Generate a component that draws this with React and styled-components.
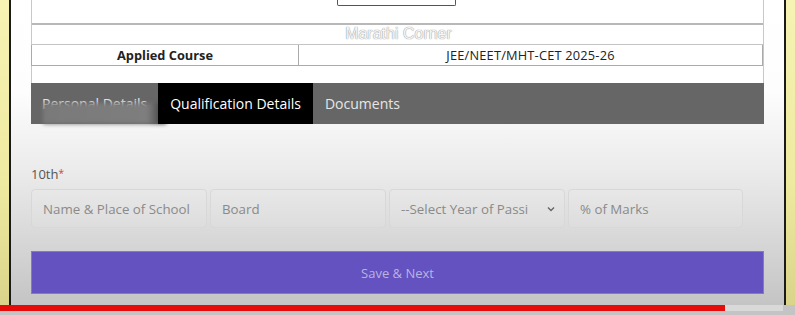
import React from 'react';
import styled, { createGlobalStyle } from 'styled-components';

const Global = createGlobalStyle`
  html, body { margin: 0; padding: 0; }
  body { background: #c0c0c0; font-family: "Open Sans", "Liberation Sans", sans-serif; }
`;

const Screen = styled.div`
  width: 795px;
  height: 315px;
  display: flex;
  flex-direction: column;
  overflow: hidden;
  background: #bdbdbd;
`;

const Stage = styled.div`
  height: 305px;
  display: flex;
`;

const Edge = styled.div`
  width: 9px;
  background: linear-gradient(180deg, #f6f3b4 0%, #eeeaa0 60%, #d9d48a 100%);
`;

const Frame = styled.div`
  flex: 1;
  border-left: 2px solid #1a1a1a;
  border-right: 2px solid #1a1a1a;
  background: linear-gradient(180deg, #ffffff 0%, #fdfdfd 30%, #ececec 55%, #d6d6d6 80%, #c4c4c4 100%);
  padding: 0 20px;
  display: flex;
  flex-direction: column;
`;

const Sheet = styled.div`
  background: #fff;
  border-left: 1px solid #c8c8c8;
  border-right: 1px solid #c8c8c8;
  display: flex;
  flex-direction: column;
`;

const TopRow = styled.div`
  height: 23px;
  display: flex;
  border-bottom: 2px solid #b8b8b8;
`;

const CutSelect = styled.div`
  width: 117px;
  height: 5px;
  margin-left: 305px;
  border: 1px solid #555;
  border-top: none;
  border-radius: 0 0 2px 2px;
`;

const Watermark = styled.div`
  height: 19px;
  text-align: center;
  font-family: "Liberation Sans", Arial, sans-serif;
  font-size: 16px;
  line-height: 17px;
  padding-left: 2px;
  color: #f6f6f6;
  text-shadow: 0 0 1px #8f8f8f, 0 0 1px #a8a8a8;
  border-bottom: 1px solid #c4c4c4;
  overflow: hidden;
`;

const CourseRow = styled.div`
  display: grid;
  grid-template-columns: 267px 1fr;
  height: 20px;
  border-left: 1px solid #aaa;
  border-bottom: 1px solid #aaa;
  margin-left: -1px;
`;

const Cell = styled.div`
  display: flex;
  align-items: center;
  justify-content: center;
  font-size: 12.8px;
  font-weight: ${p => (p.$bold ? 700 : 400)};
  color: #222;
  border-right: 1px solid #aaa;
  letter-spacing: ${p => (p.$bold ? '0' : '0.2px')};
`;

const Spacer = styled.div`
  height: 17px;
`;

const Tabs = styled.div`
  height: 41px;
  background: #666;
  display: flex;
  margin: 0 -1px;
`;

const Tab = styled.div`
  position: relative;
  display: flex;
  align-items: center;
  padding: 0 ${p => (p.$smudged ? '11px' : '12px')};
  font-size: 14px;
  color: ${p => (p.$active ? '#fff' : '#e6e6e6')};
  background: ${p => (p.$active ? '#000' : 'transparent')};
  ${p => p.$smudged && `
    &::after {
      content: '';
      position: absolute;
      left: 12px;
      right: -8px;
      top: 20px;
      bottom: 0;
      background: linear-gradient(90deg, #7a7a7a 0%, #7e7e7e 85%, #333 100%);
      filter: blur(2px);
    }
  `}
`;

const Form = styled.div`
  padding-top: 41px;
  display: flex;
  flex-direction: column;
`;

const Label = styled.div`
  font-size: 13px;
  color: #555;
  height: 16px;
  line-height: 16px;
  span {
    color: #d04050;
    font-size: 10px;
    vertical-align: 2px;
  }
`;

const Fields = styled.div`
  margin-top: 8px;
  display: grid;
  grid-template-columns: 176px 176px 176px 175px;
  gap: 3px;
`;

const Field = styled.div`
  height: 39px;
  box-sizing: border-box;
  border: 1px solid #d8d8d8;
  border-radius: 4px;
  background: rgba(255, 255, 255, 0.08);
  display: flex;
  align-items: center;
  justify-content: space-between;
  padding: 0 11px;
  font-size: 13.3px;
  color: #8a8a8a;
  white-space: nowrap;
  overflow: hidden;
`;

const Chevron = styled.svg`
  width: 10px;
  height: 10px;
  flex-shrink: 0;
  margin-right: -3px;
`;

const SaveButton = styled.div`
  margin-top: 23px;
  height: 43px;
  box-sizing: border-box;
  background: #6352bf;
  border: 1px solid #8577cf;
  display: flex;
  align-items: center;
  justify-content: center;
  font-size: 13px;
  color: #bab3e2;
`;

const Progress = styled.div`
  height: 10px;
  display: flex;
  align-items: flex-start;
  background: #c4c4c4;
`;

const Played = styled.div`
  width: 725px;
  height: 6px;
  background: #e60a0a;
`;

const Buffered = styled.div`
  width: 58px;
  height: 6px;
  background: #d9d9d9;
`;

export default function App() {
  return (
    <>
      <Global />
      <Screen>
        <Stage>
          <Edge />
          <Frame>
            <Sheet>
              <TopRow>
                <CutSelect />
              </TopRow>
              <Watermark>Marathi Corner</Watermark>
              <CourseRow>
                <Cell $bold>Applied Course</Cell>
                <Cell>JEE/NEET/MHT-CET 2025-26</Cell>
              </CourseRow>
              <Spacer />
              <Tabs>
                <Tab $smudged>Personal Details</Tab>
                <Tab $active>Qualification Details</Tab>
                <Tab>Documents</Tab>
              </Tabs>
            </Sheet>
            <Form>
              <Label>10th<span>*</span></Label>
              <Fields>
                <Field>Name &amp; Place of School</Field>
                <Field>Board</Field>
                <Field>
                  --Select Year of Passi
                  <Chevron viewBox="0 0 10 10">
                    <path d="M2 3.5 L5 6.5 L8 3.5" fill="none" stroke="#666" strokeWidth="1.4" />
                  </Chevron>
                </Field>
                <Field>% of Marks</Field>
              </Fields>
              <SaveButton>Save &amp; Next</SaveButton>
            </Form>
          </Frame>
          <Edge />
        </Stage>
        <Progress>
          <Played />
          <Buffered />
        </Progress>
      </Screen>
    </>
  );
}
